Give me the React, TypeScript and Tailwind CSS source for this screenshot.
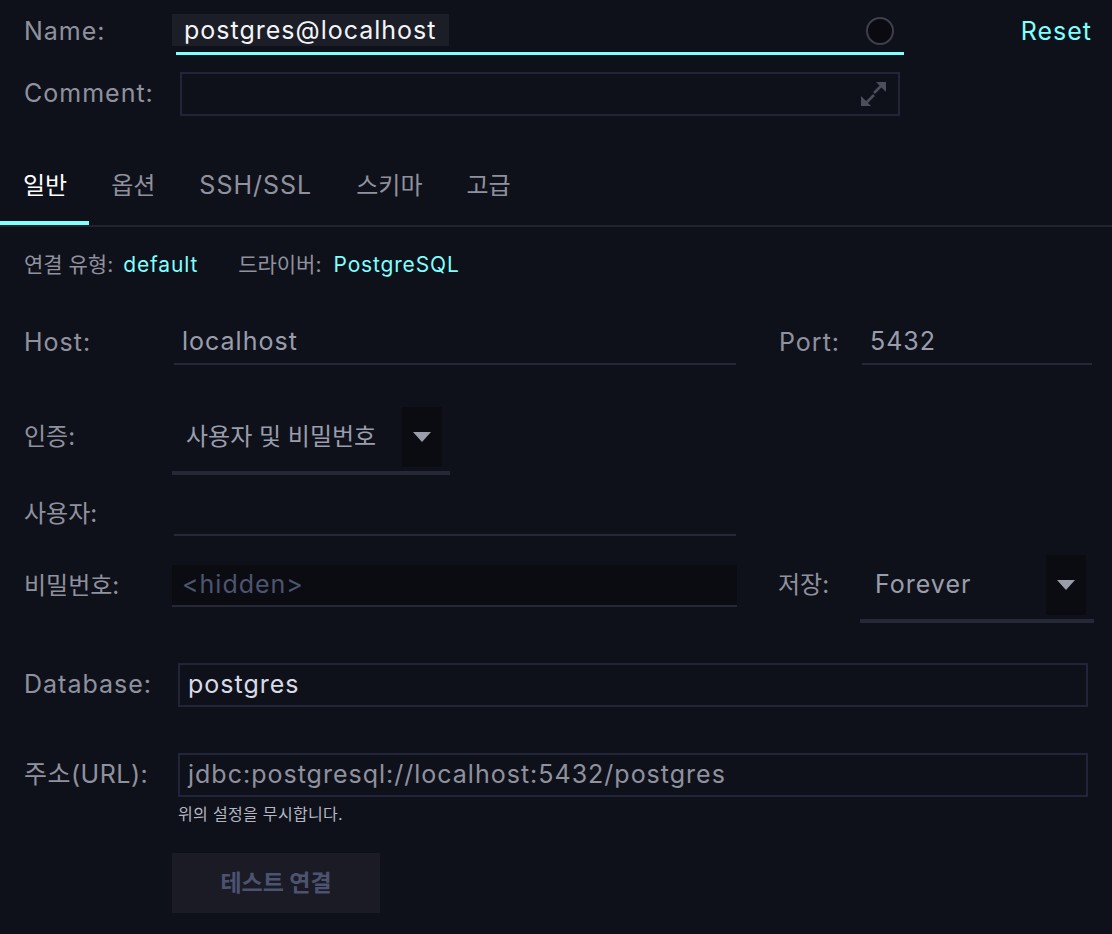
import React from 'react';

const FONT = { fontFamily: 'Inter, "Noto Sans CJK KR", sans-serif' };

const tabs = ['일반', '옵션', 'SSH/SSL', '스키마', '고급'];

// Latin text in the reference runs a little wider than Inter
const LAT = 'text-[25px] tracking-[0.04em]';
const KO = 'text-[24px]';

const ExpandIcon: React.FC = () => (
  <svg width="28" height="26" viewBox="0 0 28 26" fill="none">
    <path d="M14 12 L24 2" stroke="#4b4e5b" strokeWidth="2.5" />
    <path d="M16 1 L26 1 L26 11 Z" fill="#4b4e5b" />
    <path d="M14 14 L4 24" stroke="#4b4e5b" strokeWidth="2.5" />
    <path d="M1 15 L1 25 L11 25 Z" fill="#4b4e5b" />
  </svg>
);

const Caret: React.FC = () => (
  <svg width="18" height="10" viewBox="0 0 18 10">
    <path d="M0 0 L18 0 L9 10 Z" fill="#9a9dab" />
  </svg>
);

const Dropdown: React.FC<{ value: string; width: number; textCls: string }> = ({ value, width, textCls }) => (
  <div className="flex flex-col" style={{ width }}>
    <div className="flex h-[60px] items-center">
      <span className={`flex-1 text-[#9a9dab] ${textCls}`}>{value}</span>
      <div className="flex h-[60px] w-[40px] items-center justify-center bg-[#0b0c11]">
        <Caret />
      </div>
      <div className="w-[8px]" />
    </div>
    <div className="mt-[4px] h-[4px] bg-[#262838]" />
  </div>
);

const App: React.FC = () => {
  return (
    <div className="h-[934px] w-[1112px] overflow-hidden bg-[#0f111a]" style={FONT}>
      {/* Name */}
      <div className="flex items-start pt-[11px]">
        <div className={`flex h-[42px] w-[176px] items-center pl-6 text-[#8f919e] ${LAT}`}>Name:</div>
        <div className="relative h-[44px] w-[728px] border-b-[3px] border-[#80ffff]">
          <span className={`-ml-1 mt-[3px] inline-flex h-[32px] items-center bg-[#1b1d27] px-3 leading-none text-[#f4f4f6] ${LAT}`}>
            postgres@localhost
          </span>
          <div className="absolute right-[10px] top-[6px] h-[28px] w-[28px] rounded-full border-2 border-[#3d3f4a] bg-[#0a0b10]" />
        </div>
        <div className={`flex h-[42px] flex-1 items-center justify-end pr-5 text-[#80ffff] ${LAT}`}>Reset</div>
      </div>

      {/* Comment */}
      <div className="mt-[17px] flex items-center">
        <div className={`w-[180px] pl-6 text-[#8f919e] ${LAT}`}>Comment:</div>
        <div className="flex h-[44px] w-[720px] items-center justify-end border-2 border-[#22243a] pr-[10px]">
          <ExpandIcon />
        </div>
      </div>

      {/* Tabs */}
      <div className="mt-[35px] flex border-b-2 border-[#22232f]">
        {tabs.map((t, i) => (
          <div
            key={t}
            className={`flex h-[74px] items-center border-b-4 px-[22px] ${t === 'SSH/SSL' ? LAT : KO} ${
              i === 0 ? 'border-[#80ffff] pl-[23px] text-white' : 'border-transparent text-[#8f919e]'
            }`}
          >
            {t}
          </div>
        ))}
      </div>

      {/* Type / driver */}
      <div className="flex h-[76px] items-center pl-6 text-[21px]">
        <span className="text-[#8f919e]">연결 유형:</span>
        <span className="ml-[10px] tracking-[0.04em] text-[#80ffff]">default</span>
        <span className="ml-[40px] text-[#8f919e]">드라이버:</span>
        <span className="ml-[12px] tracking-[0.04em] text-[#80ffff]">PostgreSQL</span>
      </div>

      {/* Host / Port */}
      <div className="mt-[18px] flex items-center">
        <div className={`w-[174px] pl-6 text-[#8f919e] ${LAT}`}>Host:</div>
        <div className={`flex h-[44px] w-[562px] items-center border-b-2 border-[#262838] pl-2 text-[#9a9dab] ${LAT}`}>
          localhost
        </div>
        <div className={`ml-[43px] w-[83px] text-[#8f919e] ${LAT}`}>Port:</div>
        <div className={`flex h-[44px] w-[230px] items-center border-b-2 border-[#262838] pl-2 text-[#9a9dab] ${LAT}`}>
          5432
        </div>
      </div>

      {/* Auth */}
      <div className="mt-[42px] flex items-start">
        <div className={`flex h-[60px] w-[172px] items-center pl-6 text-[#8f919e] ${KO}`}>인증:</div>
        <Dropdown value="사용자 및 비밀번호" width={278} textCls={`pl-[14px] ${KO}`} />
      </div>

      {/* User */}
      <div className="mt-[16px] flex items-center">
        <div className={`w-[174px] pl-6 text-[#8f919e] ${KO}`}>사용자:</div>
        <div className="h-[45px] w-[562px] border-b-2 border-[#262838]" />
      </div>

      {/* Password / Save */}
      <div className="mt-[19px] flex items-start">
        <div className="mt-[10px] flex items-center">
          <div className={`w-[172px] pl-6 text-[#8f919e] ${KO}`}>비밀번호:</div>
          <div className={`flex h-[42px] w-[565px] items-center border-b-2 border-[#262838] bg-[#0b0c11] pl-[10px] text-[#4d5470] ${LAT}`}>
            &lt;hidden&gt;
          </div>
        </div>
        <div className={`ml-[41px] flex h-[60px] w-[82px] items-center text-[#8f919e] ${KO}`}>저장:</div>
        <Dropdown value="Forever" width={234} textCls={`pl-[15px] ${LAT}`} />
      </div>

      {/* Database */}
      <div className="mt-[40px] flex items-center">
        <div className={`w-[178px] pl-6 text-[#8f919e] ${LAT}`}>Database:</div>
        <div className={`flex h-[44px] w-[910px] items-center border-2 border-[#22243a] pl-[8px] text-[#d8dbe6] ${LAT}`}>
          postgres
        </div>
      </div>

      {/* URL */}
      <div className="mt-[46px] flex items-center">
        <div className="w-[178px] pl-6 text-[25px] tracking-[0.02em] text-[#8f919e]">주소(URL):</div>
        <div className={`flex h-[44px] w-[910px] items-center border-2 border-[#22243a] pl-[8px] text-[#8f919e] ${LAT}`}>
          jdbc:postgresql://localhost:5432/postgres
        </div>
      </div>
      <div className="ml-[178px] mt-[5px] text-[16px] tracking-[0.02em] text-[#b4b7c2]">위의 설정을 무시합니다.</div>

      {/* Test button */}
      <div className="ml-[172px] mt-[27px] flex h-[60px] w-[208px] items-center justify-center bg-[#1a1b25] text-[23px] font-bold text-[#4c5370]">
        테스트 연결
      </div>
    </div>
  );
};

export default App;
